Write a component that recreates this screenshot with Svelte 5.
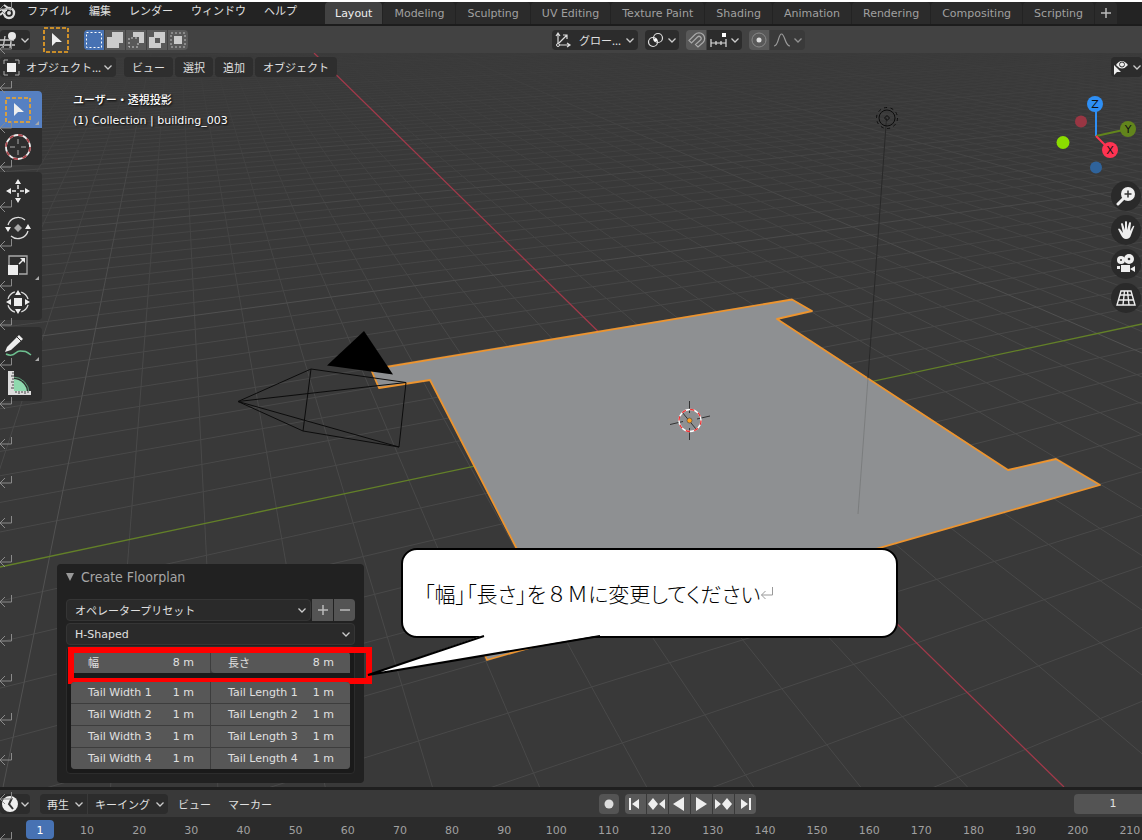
<script lang="ts">
  const menus = ['ファイル', '編集', 'レンダー', 'ウィンドウ', 'ヘルプ'];
  const workspaces = [
    'Layout', 'Modeling', 'Sculpting', 'UV Editing', 'Texture Paint',
    'Shading', 'Animation', 'Rendering', 'Compositing', 'Scripting',
  ];
  const viewMenus = ['ビュー', '選択', '追加', 'オブジェクト'];
  const selectModes = ['set', 'extend', 'subtract', 'invert', 'intersect'];
  const toolGroups = [
    ['select', 'cursor'],
    ['move', 'rotate', 'scale', 'transform'],
    ['annotate', 'measure'],
  ];
  const hasMore = ['select', 'scale', 'annotate'];
  const navTools = ['zoom', 'pan', 'camera', 'perspective'];
  const transport = ['first', 'prev-key', 'reverse', 'play', 'next-key', 'last'];
  const tails = [1, 2, 3, 4];
  const frames = Array.from({ length: 21 }, (_, i) => (i + 1) * 10);
  const returns = Array.from({ length: 22 }, (_, i) => Math.round(8 + i * 39.5));

  let workspace = $state('Layout');
  let tool = $state('select');
  let width = $state('8 m');
  let length = $state('8 m');

  // Ground plane (metres) to viewport pixels
  const G = -0.0445;
  const H = 0.02174;
  const NEAR = 0.25;

  function project(x: number, y: number) {
    const w = 1 + G * x + H * y;
    const u = (-7.816 * x + 64.98 * y + 689) / w;
    const v = (3.016 * x - 1.317 * y + 420.5) / w;
    return `${u.toFixed(1)} ${v.toFixed(1)}`;
  }

  function gridPath(range: number, step: number) {
    let d = '';
    for (let k = -range; k <= range; k += step) {
      if (k === 0) continue;
      if (step === 1 && k % 10 === 0) continue;
      const xMax = Math.min(range, (NEAR - 1 - H * k) / G);
      const yMin = Math.max(-range, (NEAR - 1 - G * k) / H);
      if (xMax > -range && 1 - G * range + H * k > NEAR) d += `M${project(-range, k)}L${project(xMax, k)}`;
      if (yMin < range) d += `M${project(k, yMin)}L${project(k, range)}`;
    }
    return d;
  }

  const minorGrid = gridPath(70, 1);
  const majorGrid = gridPath(160, 10);
</script>

{#snippet chevron()}
  <svg class="chevron" viewBox="0 0 10 10" width="10" height="10"><path d="M1.5 3.5 5 7l3.500-3.500" /></svg>
{/snippet}

<div class="app">
  <header class="topbar">
    <svg class="logo" viewBox="0 0 17 20" width="17" height="20">
      <path d="M0 8h7M0 13l6-5M4 3l7 5" stroke="#ddd" stroke-width="2" fill="none" />
      <circle cx="9" cy="11" r="5" fill="none" stroke="#ddd" stroke-width="2.400" />
      <circle cx="9" cy="11" r="2" fill="#ddd" />
    </svg>
    <nav class="menus">
      {#each menus as menu}
        <button class="ja">{menu}</button>
      {/each}
    </nav>
    <div class="tabs">
      {#each workspaces as name}
        <button class:active={workspace === name} onclick={() => (workspace = name)}>{name}</button>
      {/each}
      <button class="add" aria-label="Add workspace">
        <svg viewBox="0 0 12 12" width="12" height="12"><path d="M6 1v10M1 6h10" /></svg>
      </button>
    </div>
  </header>

  <div class="toolheader">
    <button class="dark editor" aria-label="Editor type">
      <svg viewBox="0 0 18 18" width="18" height="18">
        <path d="M0 9h14M0 14h15M5 5 3 17M11 10 10 17" stroke="#ccc" fill="none" stroke-width="1.300" />
        <circle cx="12" cy="5" r="4" fill="#e6e6e6" />
      </svg>
      {@render chevron()}
    </button>
    <button class="plain" aria-label="Active tool">
      <svg viewBox="0 0 26 26" width="26" height="26">
        <rect x="1" y="1" width="24" height="24" class="dash" />
        <path d="M9 6v13l4-4h6z" fill="#eee" />
      </svg>
    </button>
    <div class="joined modes">
      {#each selectModes as mode, i}
        <button class:on={i === 0} aria-label={mode}>
          <svg viewBox="0 0 20 20" width="20" height="20">
            {#if mode === 'set'}
              <rect x="2.500" y="2.500" width="15" height="15" fill="none" stroke="#fff" stroke-dasharray="2 2" />
            {:else if mode === 'extend'}
              <path d="M7 2h11v11h-4v5H2V7h5z" fill="#ccc" />
            {:else if mode === 'subtract'}
              <path d="M7 2h11v11h-5V7H7z" fill="#ccc" />
              <path d="M11 8H3v9h9v-4" fill="none" stroke="#ccc" stroke-dasharray="2 2" />
            {:else if mode === 'invert'}
              <path d="M7 2h11v11h-4v5H2V7h5zM8 8v5h5V8z" fill="#ccc" fill-rule="evenodd" />
            {:else}
              <rect x="3" y="3" width="14" height="14" fill="none" stroke="#bbb" stroke-dasharray="2 2" />
              <rect x="6" y="6" width="8" height="8" fill="#ccc" />
            {/if}
          </svg>
        </button>
      {/each}
    </div>
    <div class="spacer-left"></div>
    <div class="center">
      <div class="pick orientation">
        <svg class="lead" viewBox="0 0 18 18" width="18" height="18">
          <path d="M4 13V3M2 5l2-3 2 3M4 14h11M13 12l3 2-3 2M5 12l8-8M9 4h4v4" fill="none" stroke="#ddd" stroke-width="1.200" />
          <circle cx="4" cy="14" r="1.500" fill="#333" stroke="#ddd" />
        </svg>
        <select class="ja" aria-label="Transform orientation"><option>グロー...</option></select>
        {@render chevron()}
      </div>
      <button class="dark" aria-label="Pivot point">
        <svg viewBox="0 0 18 18" width="18" height="18">
          <circle cx="6" cy="11" r="4.500" class="line" />
          <circle cx="11" cy="7" r="4.500" class="line" />
          <circle cx="8.500" cy="9" r="1.800" fill="#fff" />
        </svg>
        {@render chevron()}
      </button>
      <div class="joined">
        <button aria-label="Snap">
          <svg viewBox="0 0 20 20" width="20" height="20">
            <path d="M3 10.500 9 4.500a5.500 5.500 0 0 1 8 8l-5 4.500-2.500-2.500 5-4.500a2 2 0 0 0-3-3l-6 6z" fill="none" stroke="#aaa" stroke-width="1.200" />
          </svg>
        </button>
        <button class="dark" aria-label="Snap target">
          <svg viewBox="0 0 18 18" width="18" height="18">
            <path d="M1 12h15M1 8v8M6 10v4M11 10v4M16 8v8" class="line" />
            <rect x="12" y="2" width="4" height="4" fill="#fff" />
          </svg>
          {@render chevron()}
        </button>
      </div>
      <div class="joined">
        <button aria-label="Proportional editing">
          <svg viewBox="0 0 20 20" width="20" height="20">
            <circle cx="10" cy="10" r="7" fill="none" stroke="#888" />
            <circle cx="10" cy="10" r="2.500" fill="#ddd" />
          </svg>
        </button>
        <button class="dark faded" aria-label="Falloff">
          <svg viewBox="0 0 18 18" width="18" height="18">
            <path d="M1 15c5 0 4-12 7.500-12S12 15 17 15" class="line" />
          </svg>
          {@render chevron()}
        </button>
      </div>
    </div>
    <div class="spacer-right"></div>
  </div>

  <main class="viewport">
    <svg class="scene" viewBox="0 53 1142 734" preserveAspectRatio="xMidYMid slice">
      <defs>
        <linearGradient id="haze" gradientUnits="userSpaceOnUse" x1="0" y1="53" x2="0" y2="340">
          <stop offset="0" stop-color="#393939" stop-opacity="0.900" />
          <stop offset="0.350" stop-color="#393939" stop-opacity="0.500" />
          <stop offset="1" stop-color="#393939" stop-opacity="0" />
        </linearGradient>
      </defs>
      <rect y="53" width="1142" height="734" fill="#393939" />
      <path d={minorGrid} fill="none" stroke="#494949" />
      <path d={majorGrid} fill="none" stroke="#525252" />
      <rect y="53" width="1142" height="734" fill="url(#haze)" />
      <path d="M0 567 689 420.500 1142 324" fill="none" stroke="#638028" stroke-width="1.300" />
      <path d="M314 53 689 420.500 1064 787" fill="none" stroke="#a1394a" stroke-width="1.300" />

      <path
        d="M371 369.500 792 299.500 812 311 777 319 1008 470 1056 459 1100 485 487 660 467 616 541 596 430 380 379 388z"
        fill="#8e9092" stroke="#ec942f" stroke-width="1.800" stroke-linejoin="round"
      />

      <path d="M364 331 327 365.500 393 374.500z" fill="#000" />
      <path d="M238 401.500 311 369 406 382.500 399 447 303 431zM311 369 303 431M238 401.500 406 382.500M238 401.500 399 447" class="wire" />

      <path d="M886.500 118 868 378" stroke="#292929" />
      <path d="M868 378 858 514" stroke="#7b7d7e" />
      <circle cx="887" cy="118" r="8" class="wire" />
      <circle cx="887" cy="118" r="10.500" class="wire" stroke-dasharray="3 3.600" />
      <path d="m887 115.500 2.500 2.500-2.500 2.500-2.500-2.500z" class="wire" />

      <path d="M689.500 401v12M689.500 428v12M670 424.500l13-3M697 419l13-3M682 412l14 17" stroke="#333" fill="none" />
      <circle cx="690" cy="420.500" r="11" fill="none" stroke="#fff" stroke-width="1.300" />
      <circle cx="690" cy="420.500" r="11" fill="none" stroke="#e33" stroke-width="1.300" stroke-dasharray="4.300 4.300" />
      <circle cx="689.500" cy="420.500" r="2.500" fill="#ffa01e" stroke="#444" stroke-width="0.600" />
    </svg>

    <div class="viewheader">
      <div class="pick mode">
        <svg class="lead" viewBox="0 0 18 18" width="18" height="18">
          <rect x="5" y="5" width="9" height="9" fill="#eee" />
          <path d="M2 6V2h4M13 2h4v4M17 13v4h-4M6 17H2v-4" fill="none" stroke="#aaa" />
        </svg>
        <select class="ja" aria-label="Mode"><option>オブジェクト...</option></select>
        {@render chevron()}
      </div>
      <nav>
        {#each viewMenus as menu}
          <button class="ja">{menu}</button>
        {/each}
      </nav>
      <button class="dark visibility" aria-label="Object visibility">
        <svg viewBox="0 0 18 18" width="18" height="18">
          <path d="M4 7q5.500-8 12 0-6 7-12 0z" fill="#eee" />
          <circle cx="10" cy="6.500" r="2.500" fill="#eee" stroke="#333" />
          <path d="M2 7v10l3-3h4z" fill="#eee" />
        </svg>
        {@render chevron()}
      </button>
    </div>

    <div class="info">
      <p class="ja">ユーザー・透視投影</p>
      <p>(1) Collection | building_003</p>
    </div>

    <aside class="toolbar">
      {#each toolGroups as group}
        <div class="toolgroup">
          {#each group as name}
            <button class:active={tool === name} class:more={hasMore.includes(name)} aria-label={name} onclick={() => (tool = name)}>
              <svg viewBox="0 0 28 28" width="28" height="28">
                {#if name === 'select'}
                  <rect x="2" y="2" width="24" height="24" class="dash" />
                  <path d="M10 7v13l4-4h6z" fill="#eee" />
                {:else if name === 'cursor'}
                  <circle cx="14" cy="14" r="12" fill="none" stroke="#eee" stroke-width="1.800" />
                  <circle cx="14" cy="14" r="12" fill="none" stroke="#a8444a" stroke-width="1.800" stroke-dasharray="4.700 4.700" />
                  <path d="M14 6v5M14 17v5M6 14h5M17 14h5" stroke="#aaa" />
                {:else if name === 'move'}
                  <path d="m14 2 3 5h-6zM14 26l-3-5h6zM2 14l5-3v6zM26 14l-5 3v-6z" fill="#eee" />
                  <path d="M14 8v4M14 16v4M8 14h4M16 14h4" stroke="#eee" stroke-width="1.500" />
                {:else if name === 'rotate'}
                  <path d="M4 11a10.500 10.500 0 0 1 17-5M24 17a10.500 10.500 0 0 1-17 5" fill="none" stroke="#ddd" stroke-width="1.300" />
                  <path d="m14 10 4 4-4 4-4-4z" fill="#aaa" />
                  <path d="M1 13h6l-3 5zM27 15h-6l3-5z" fill="#eee" />
                {:else if name === 'scale'}
                  <path d="M5 14V5h18v18h-8" fill="none" stroke="#aaa" stroke-width="1.300" />
                  <rect x="4" y="14" width="10" height="10" fill="#eee" />
                  <path d="m15 13 4-4" stroke="#eee" stroke-width="1.500" /><path d="M21 7v5l-5-5z" fill="#eee" />
                {:else if name === 'transform'}
                  <circle cx="14" cy="14" r="10.500" fill="none" stroke="#ddd" stroke-width="1.300" stroke-dasharray="10 6.490" stroke-dashoffset="-3" />
                  <rect x="10" y="10" width="8" height="8" fill="#eee" />
                  <path d="m14 2 3 5h-6zM14 26l-3-5h6zM2 14l5-3v6zM26 14l-5 3v-6z" fill="#eee" />
                {:else if name === 'annotate'}
                  <path d="M2 22c8 4 9-3 14-3s6 0 11 4" fill="none" stroke="#6dbf8f" stroke-width="1.500" />
                  <path d="m1 20 2-5L15 3l4 4L7 18z" fill="#eee" /><path d="m13 5 4 4" stroke="#333" />
                {:else}
                  <path d="M9 10a14 14 0 0 1 14 14H9z" fill="#8fd9ae" />
                  <path d="M9 8a16 16 0 0 1 16 16" fill="none" stroke="#5fa27c" />
                  <path d="M4 2h6v20h17v4H4z" fill="#ddd" />
                  <path d="M10 4H8M10 7H7M10 10H8M10 13H7M10 16H8M10 19H7M12 22v2M15 22v3M18 22v2M21 22v3M24 22v2" stroke="#444" />
                {/if}
              </svg>
            </button>
          {/each}
        </div>
      {/each}
    </aside>

    <aside class="nav">
      <svg viewBox="1042 88 100 92" width="100" height="92">
        <path d="M1096 136V104" stroke="#2e8ff5" stroke-width="2" />
        <path d="m1096 136 32-7" stroke="#62851c" stroke-width="2" />
        <path d="m1096 136 14 14" stroke="#ff3352" stroke-width="2" />
        <circle cx="1081" cy="121.500" r="6" fill="#993643" />
        <circle cx="1063" cy="142.500" r="6.500" fill="#8bdc00" />
        <circle cx="1096" cy="167.500" r="6" fill="#2f639b" />
        <circle cx="1095" cy="104" r="8" fill="#2e8ff5" />
        <circle cx="1128" cy="129" r="8" fill="#62851c" />
        <circle cx="1110" cy="150" r="8" fill="#ff3352" />
        <text x="1095" y="108">Z</text>
        <text x="1128" y="133">Y</text>
        <text x="1110" y="154">X</text>
      </svg>
      {#each navTools as name}
        <button aria-label={name}>
          <svg viewBox="0 0 20 20" width="20" height="20">
            {#if name === 'zoom'}
              <circle cx="12" cy="8" r="7" fill="#eee" />
              <path d="m7 13-5 5" stroke="#eee" stroke-width="3" stroke-linecap="round" />
              <path d="M12 4.500v7M8.500 8h7" stroke="#333" stroke-width="1.500" />
            {:else if name === 'pan'}
              <path
                d="M2 9q1-1 2 0l3 4L5 4q1-2 2 0l2 6V2q1-2 2 0v8l2-7q1-2 2 0l-1 8 3-5q2-1 1 1l-3 8q-1 4-5 4-3 0-5-4z"
                fill="#eee"
              />
            {:else if name === 'camera'}
              <circle cx="5" cy="6" r="4" fill="#eee" /><circle cx="13" cy="5" r="5" fill="#eee" />
              <circle cx="5" cy="6" r="1" fill="#333" /><circle cx="13" cy="5" r="1.300" fill="#333" />
              <path d="M5 11h9v7H5zM1 12h3v3H1zM14 15l5-3v6z" fill="#eee" />
            {:else}
              <path d="M5 3h10l4 14H1zM8.500 3 7 17M11.500 3 13 17M4 7h12M2.500 12h15" fill="none" stroke="#eee" stroke-width="1.400" />
            {/if}
          </svg>
        </button>
      {/each}
    </aside>

    <section class="panel">
      <h2><svg viewBox="0 0 8 8" width="8" height="8"><path d="M0 0h8L4 8z" fill="#999" /></svg>Create Floorplan</h2>
      <div class="preset">
        <div class="pick">
          <select class="ja" aria-label="Operator preset"><option>オペレータープリセット</option></select>
          {@render chevron()}
        </div>
        <button aria-label="Add preset"><svg viewBox="0 0 12 12" width="12" height="12"><path d="M6 1v10M1 6h10" /></svg></button>
        <button aria-label="Remove preset"><svg viewBox="0 0 12 12" width="12" height="12"><path d="M1 6h10" /></svg></button>
      </div>
      <div class="pick">
        <select aria-label="Floorplan type"><option>H-Shaped</option></select>
        {@render chevron()}
      </div>
      <div class="box">
        <div class="fields size">
          <label><span class="ja">幅</span><input bind:value={width} /></label>
          <label><span class="ja">長さ</span><input bind:value={length} /></label>
          <div class="highlight"></div>
        </div>
        <div class="fields">
          {#each tails as n}
            <label><span>Tail Width {n}</span><input value="1 m" /></label>
            <label><span>Tail Length {n}</span><input value="1 m" /></label>
          {/each}
        </div>
      </div>
    </section>

    <div class="callout">
      <p>「幅」「長さ」を<span class="full">８Ｍ</span>に変更してください</p>
      <svg viewBox="0 0 12 14" width="13" height="14"><path d="M12 1v8H1M5 5 1 9l4 4" fill="none" stroke="#999" /></svg>
      <svg class="pointer" viewBox="0 0 250 44" width="250" height="44">
        <path d="M123 0 4 41 243 0z" fill="#fff" />
        <path d="M120 2 4 41 236 2" fill="none" stroke="#000" stroke-width="2" />
      </svg>
    </div>
  </main>

  <footer class="timeline">
    <div class="timeheader">
      <button class="dark editor" aria-label="Editor type">
        <svg viewBox="0 0 18 18" width="18" height="18">
          <circle cx="10" cy="9" r="8" fill="#eee" /><path d="M12 3 9 9l4 5" fill="none" stroke="#333" stroke-width="2" />
        </svg>
        {@render chevron()}
      </button>
      <div class="joined playback">
        <button class="dark ja">再生 {@render chevron()}</button>
        <button class="dark ja">キーイング {@render chevron()}</button>
      </div>
      <button class="plain ja">ビュー</button>
      <button class="plain ja">マーカー</button>
      <div class="transport">
        <button class="record" aria-label="Auto keying"><svg viewBox="0 0 20 20" width="20" height="20"><circle cx="10" cy="10" r="4.500" fill="#ddd" /></svg></button>
        <div class="joined">
          {#each transport as name}
            <button aria-label={name}>
              <svg viewBox="0 0 20 20" width="20" height="20">
                {#if name === 'first'}
                  <path d="M4 4h2v12H4zM14 5v10l-7-5z" fill="#eee" />
                {:else if name === 'prev-key'}
                  <path d="m6 4 5 6-5 6-5-6zM18 5v10l-6-5z" fill="#eee" />
                {:else if name === 'reverse'}
                  <path d="M15 3v14L4 10z" fill="#eee" />
                {:else if name === 'play'}
                  <path d="M5 3v14l11-7z" fill="#eee" />
                {:else if name === 'next-key'}
                  <path d="m14 4 5 6-5 6-5-6zM2 5v10l6-5z" fill="#eee" />
                {:else}
                  <path d="M14 4h2v12h-2zM6 5v10l7-5z" fill="#eee" />
                {/if}
              </svg>
            </button>
          {/each}
        </div>
      </div>
      <input class="frame" aria-label="Current frame" value="1" />
    </div>
    <div class="ruler">
      <span class="playhead">1</span>
      {#each frames as frame}
        <span>{frame}</span>
      {/each}
    </div>
  </footer>

  <svg class="returns" width="14" height="840" viewBox="0 0 14 840">
    {#each returns as y}
      <path d="M11.500 {y - 6}v7H0M5 {y - 4}l-5 5 5 5" fill="none" stroke="#8a8a8a" />
    {/each}
  </svg>
</div>

<style>
  :global(body) { margin: 0; background: #232323; }
  .app {
    position: relative;
    display: flex;
    flex-direction: column;
    height: 100vh;
    overflow: hidden;
    box-sizing: border-box;
    border-top: 2px solid #fff;
    font-family: 'DejaVu Sans', 'Noto Sans CJK JP', sans-serif;
    font-size: 11px;
    color: #e0e0e0;
    white-space: nowrap;
  }
  button, select, input {
    font: inherit;
    color: inherit;
    border: 0;
    margin: 0;
    padding: 0;
    background: none;
    box-sizing: border-box;
  }
  select { appearance: none; }
  svg { flex: none; display: block; }
  p, h2 { margin: 0; }
  .ja { font-family: 'Noto Sans CJK JP', sans-serif; }
  .chevron path { fill: none; stroke: #ccc; stroke-width: 1.3; }
  .line { fill: none; stroke: #ddd; stroke-width: 1.2; }
  .wire { fill: none; stroke: #0c0c0c; }
  .dash { fill: none; stroke: #f5a623; stroke-width: 1.6; stroke-dasharray: 4 2; }

  .topbar {
    display: flex;
    height: 22px;
    flex: none;
    background: #232323;
    border-bottom: 2px solid #1c1c1c;
  }
  .menus { display: flex; flex: none; gap: 18px; padding-left: 10px; width: 308px; box-sizing: border-box; }
  .menus button { height: 17px; line-height: 17px; }
  .tabs { display: flex; gap: 1px; }
  .tabs button {
    padding: 0 11px;
    background: #2b2b2b;
    color: #a0a0a0;
    border-radius: 4px 4px 0 0;
  }
  .tabs .active { background: #424242; color: #eee; padding: 0 10px; }
  .tabs .add { padding: 0 5px; }
  .tabs .add path, .preset button path { fill: none; stroke: #bbb; stroke-width: 1.5; }

  .toolheader {
    display: flex;
    align-items: center;
    flex: none;
    height: 27px;
    background: #424242;
  }
  .dark {
    display: flex;
    align-items: center;
    gap: 2px;
    height: 20px;
    padding: 0 2px;
    background: #2c2c2c;
    border-radius: 4px;
  }
  .editor { padding: 0; }
  .toolheader .plain { margin: 0 15px 0 13px; }
  .joined { display: flex; gap: 1px; }
  .joined button { height: 20px; background: #595959; border-radius: 0; }
  .joined button:first-child { border-radius: 4px 0 0 4px; }
  .joined button:last-child { border-radius: 0 4px 4px 0; }
  .joined .dark { background: #2c2c2c; }
  .joined .faded { background: #3a3a3a; }
  .faded svg { opacity: 0.6; }
  .joined .on { background: #4772b3; }
  .spacer-left { flex: 365; }
  .spacer-right { flex: 338; }
  .center { display: flex; gap: 7px; }
  .center .joined .dark { padding: 0 2px 0 3px; }

  .pick {
    display: grid;
    align-items: center;
    background: #2c2c2c;
    border-radius: 4px;
  }
  .pick > * { grid-area: 1 / 1; }
  .pick select { width: 100%; height: 20px; }
  .pick .chevron { justify-self: end; margin-right: 3px; pointer-events: none; }
  .pick .lead { margin-left: 2px; pointer-events: none; }
  .orientation { width: 86px; }
  .orientation select { padding-left: 27px; }

  .viewport { position: relative; flex: 1; min-height: 0; overflow: hidden; }
  .scene { position: absolute; inset: 0; width: 100%; height: 100%; }
  .viewheader { position: relative; display: flex; padding-top: 4px; }
  .viewheader nav { display: flex; gap: 2px; margin-left: 8px; }
  .viewheader nav button { height: 20px; padding: 0 8px; background: #2e2e2e; border-radius: 4px; }
  .viewheader .mode { width: 116px; background: #2e2e2e; }
  .viewheader .mode select { padding-left: 26px; }
  .visibility { margin-left: auto; padding: 0 0 0 1px; }

  .info {
    position: absolute;
    left: 73px;
    top: 35px;
    line-height: 22px;
    color: #fff;
    text-shadow: 1px 1px 2px #000;
  }
  .info .ja { font-weight: 500; }

  .toolbar {
    position: absolute;
    left: 0;
    top: 38px;
    width: 42px;
    display: flex;
    flex-direction: column;
    gap: 7px;
  }
  .toolgroup { background: #2e2e2e; border-radius: 0 4px 4px 0; overflow: hidden; }
  .toolgroup button { position: relative; display: block; width: 42px; height: 37px; padding-left: 4px; }
  .toolgroup .active { background: #5680c2; }
  .toolgroup .more::after {
    content: '';
    position: absolute;
    right: 3px;
    bottom: 3px;
    border: 2px solid #aaa;
    border-top-color: transparent;
    border-left-color: transparent;
  }

  .nav {
    position: absolute;
    right: 0;
    top: 35px;
    display: flex;
    flex-direction: column;
    align-items: flex-end;
    gap: 4px;
  }
  .nav text { text-anchor: middle; fill: #111; }
  .nav button {
    width: 30px;
    height: 30px;
    margin-right: 1px;
    padding: 5px;
    border-radius: 50%;
    background: #2a2a2a;
  }
  .nav button:first-of-type { margin-top: -3px; }

  .panel {
    position: absolute;
    left: 57px;
    bottom: 4px;
    width: 307px;
    box-sizing: border-box;
    padding: 0 9px 9px;
    background: #212121;
    border-radius: 4px;
  }
  .panel h2 {
    display: flex;
    align-items: center;
    gap: 7px;
    height: 26px;
    margin-bottom: 9px;
    font: 400 14px 'DejaVu Sans Condensed', 'DejaVu Sans', sans-serif;
    color: #a6a6a6;
  }
  .preset { display: flex; gap: 1px; margin-bottom: 2px; }
  .preset .pick { flex: 1; }
  .preset button {
    display: grid;
    place-items: center;
    width: 21px;
    background: #545454;
  }
  .preset button:last-child { border-radius: 0 4px 4px 0; }
  .panel .pick { box-sizing: border-box; height: 22px; background: #2a2a2a; border: 1px solid #353535; }
  .panel .pick select { padding-left: 8px; }
  .box {
    margin-top: 1px;
    padding: 5px 4px 4px;
    background: #1a1a1a;
    border: 1px solid #2c2c2c;
    border-radius: 4px;
  }
  .fields {
    position: relative;
    display: grid;
    grid-template-columns: 1fr 1fr;
    gap: 1px;
    border-radius: 4px;
    background: #3d3d3d;
  }
  .size { margin-bottom: 9px; }
  .fields label {
    display: flex;
    align-items: center;
    height: 21px;
    box-sizing: border-box;
    padding: 0 16px 1px 17px;
    background: #575757;
  }
  .fields label:first-child { border-top-left-radius: 4px; }
  .fields label:nth-child(2) { border-top-right-radius: 4px; }
  .fields label:nth-last-child(2) { border-bottom-left-radius: 4px; }
  .fields label:last-child { border-bottom-right-radius: 4px; }
  .fields input { flex: 1; width: 0; text-align: right; }
  .highlight {
    position: absolute;
    inset: -5px -22px -11px -3px;
    border: 6px solid #f00;
    pointer-events: none;
  }

  .callout {
    position: absolute;
    left: 401px;
    bottom: 149px;
    width: 497px;
    height: 90px;
    box-sizing: border-box;
    display: flex;
    align-items: center;
    padding-left: 21px;
    background: #fff;
    color: #000;
    border: 2px solid #000;
    border-radius: 16px;
    font: 300 21px 'Noto Sans CJK JP', sans-serif;
  }
  .callout p { font-feature-settings: 'palt'; }
  .full { font-feature-settings: normal; }
  .pointer { position: absolute; left: -39px; top: calc(100% - 2px); }

  .timeline { flex: none; border-top: 3px solid #1f1f1f; }
  .timeheader { display: flex; align-items: center; height: 27px; background: #393939; }
  .playback { margin-left: 10px; }
  .joined .dark.ja { padding: 0 3px 0 7px; gap: 5px; }
  .timeheader > .plain { margin-left: 10px; }
  .timeheader > .plain + .plain { margin-left: 17px; }
  .transport { display: flex; gap: 6px; margin: 0 auto; padding-left: 8px; }
  .record { height: 20px; background: #545454; border-radius: 4px; }
  .transport .joined button { width: 21px; }
  .frame {
    width: 78px;
    height: 20px;
    margin-right: -10px;
    background: #545454;
    border-radius: 4px;
    text-align: center;
  }
  .ruler {
    position: relative;
    display: flex;
    height: 23px;
    padding-left: 61px;
    margin-right: -14px;
    background: #2b2b2b;
    color: #a0a0a0;
    line-height: 27px;
  }
  .ruler span { flex: 1; width: 0; text-align: center; }
  .ruler .playhead {
    position: absolute;
    left: 26px;
    top: 3px;
    width: 28px;
    height: 19px;
    line-height: 21px;
    background: #4772b3;
    color: #fff;
    border-radius: 4px;
  }
  .returns { position: absolute; left: 0; top: -2px; pointer-events: none; }
</style>
